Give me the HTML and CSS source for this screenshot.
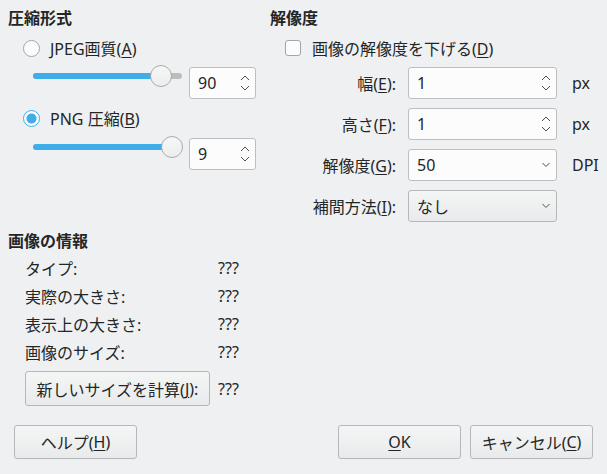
FILE: index.html
```html
<!doctype html>
<html lang="ja">
<head>
  <meta charset="UTF-8">
  <title>画像のエクスポート</title>
  <link rel="stylesheet" href="styles.css">
</head>
<body>
  <div class="dialog">
    <div class="top">
      <div class="col-left">
        <div class="title">圧縮形式</div>
        <div class="option">
          <span class="radio"></span>
          <span>JPEG画質(<u>A</u>)</span>
        </div>
        <div class="slider-row">
          <div class="slider">
            <div class="track"><div class="fill" style="width: 88%"></div></div>
            <div class="knob" style="left: 117px"></div>
          </div>
          <div class="spin small">
            <span class="value">90</span>
            <svg class="arrows" width="10" height="16" viewBox="0 0 10 16">
              <polyline points="1,5 5,1 9,5" />
              <polyline points="1,11 5,15 9,11" />
            </svg>
          </div>
        </div>
        <div class="option">
          <span class="radio checked"></span>
          <span>PNG 圧縮(<u>B</u>)</span>
        </div>
        <div class="slider-row second">
          <div class="slider">
            <div class="track"><div class="fill" style="width: 100%"></div></div>
            <div class="knob" style="left: 128px"></div>
          </div>
          <div class="spin small">
            <span class="value">9</span>
            <svg class="arrows" width="10" height="16" viewBox="0 0 10 16">
              <polyline points="1,5 5,1 9,5" />
              <polyline points="1,11 5,15 9,11" />
            </svg>
          </div>
        </div>
      </div>

      <div class="col-right">
        <div class="title">解像度</div>
        <div class="option check-row">
          <span class="checkbox"></span>
          <span>画像の解像度を下げる(<u>D</u>)</span>
        </div>
        <div class="form">
          <div class="form-row">
            <span class="label">幅(<u>E</u>):</span>
            <div class="spin wide">
              <span class="value">1</span>
              <svg class="arrows" width="10" height="16" viewBox="0 0 10 16">
                <polyline points="1,5 5,1 9,5" />
                <polyline points="1,11 5,15 9,11" />
              </svg>
            </div>
            <span class="unit">px</span>
          </div>
          <div class="form-row">
            <span class="label">高さ(<u>F</u>):</span>
            <div class="spin wide">
              <span class="value">1</span>
              <svg class="arrows" width="10" height="16" viewBox="0 0 10 16">
                <polyline points="1,5 5,1 9,5" />
                <polyline points="1,11 5,15 9,11" />
              </svg>
            </div>
            <span class="unit">px</span>
          </div>
          <div class="form-row">
            <span class="label">解像度(<u>G</u>):</span>
            <div class="spin wide">
              <span class="value">50</span>
              <svg class="arrows" width="10" height="8" viewBox="0 0 10 8">
                <polyline points="1.5,2 5,5.5 8.5,2" />
              </svg>
            </div>
            <span class="unit">DPI</span>
          </div>
          <div class="form-row">
            <span class="label">補間方法(<u>I</u>):</span>
            <div class="spin wide combo">
              <span class="value">なし</span>
              <svg class="arrows" width="10" height="8" viewBox="0 0 10 8">
                <polyline points="1.5,2 5,5.5 8.5,2" />
              </svg>
            </div>
          </div>
        </div>
      </div>
    </div>

    <div class="info">
      <div class="title">画像の情報</div>
      <div class="info-row"><span class="info-label">タイプ:</span><span>???</span></div>
      <div class="info-row"><span class="info-label">実際の大きさ:</span><span>???</span></div>
      <div class="info-row"><span class="info-label">表示上の大きさ:</span><span>???</span></div>
      <div class="info-row"><span class="info-label">画像のサイズ:</span><span>???</span></div>
      <div class="info-row calc">
        <span class="info-label"><span class="btn calc-btn">新しいサイズを計算(<u>J</u>):</span></span>
        <span>???</span>
      </div>
    </div>

    <div class="buttons">
      <span class="btn">ヘルプ(<u>H</u>)</span>
      <span class="spacer"></span>
      <span class="btn"><u>O</u>K</span>
      <span class="btn">キャンセル(<u>C</u>)</span>
    </div>
  </div>
</body>
</html>
```

FILE: styles.css
```css
html, body {
    margin: 0;
    padding: 0;
}

body {
    width: 607px;
    height: 474px;
    background: #eff0f1;
    color: #232627;
    font-family: "Noto Sans", "Noto Sans CJK JP", sans-serif;
    font-size: 16px;
    overflow: hidden;
}

u {
    text-decoration: underline;
    text-underline-offset: 2px;
    text-decoration-thickness: 1px;
}

.dialog {
    padding: 7px 0 0 8px;
}

.top {
    display: flex;
    height: 215px;
}

.col-left {
    width: 262px;
}

.col-right {
    flex: 1;
}

.title {
    font-weight: bold;
    height: 22px;
    line-height: 22px;
}

.option {
    display: flex;
    align-items: center;
    height: 28px;
    margin-top: 5px;
    padding-left: 15px;
}

.radio {
    width: 15px;
    height: 15px;
    border: 1px solid #a2a4a6;
    border-radius: 50%;
    background: #fcfcfc;
    margin-right: 10px;
}

.radio.checked {
    border-color: #3daee9;
    background: radial-gradient(circle, #3daee9 0 4.5px, #fcfcfc 5.5px);
}

.slider-row {
    display: flex;
    height: 32px;
    margin-top: 5px;
}

.slider-row.second {
    margin-top: 6px;
}

.slider {
    position: relative;
    width: 149px;
    height: 20px;
    margin: -1px 7px 0 25px;
}

.track {
    margin-top: 7px;
    height: 6px;
    border-radius: 3px;
    background: #bcbdbe;
    overflow: hidden;
}

.fill {
    height: 100%;
    background: #3daee9;
}

.knob {
    position: absolute;
    top: -1px;
    width: 20px;
    height: 20px;
    border: 1px solid #a9abad;
    border-radius: 50%;
    background: linear-gradient(#f6f7f7, #eceded);
}

.spin {
    position: relative;
    display: flex;
    align-items: center;
    box-sizing: border-box;
    height: 32px;
    border: 1px solid #bcbebf;
    border-radius: 3px;
    background: #fcfcfc;
    padding-left: 8px;
}

.spin.small {
    width: 67px;
}

.spin.wide {
    width: 149px;
}

.spin.combo {
    background: linear-gradient(#f4f5f5, #e9eaeb);
    border-color: #b5b7b8;
}

.value {
    flex: 1;
}

.arrows {
    margin-right: 5px;
    fill: none;
    stroke: #4d5052;
    stroke-width: 1;
}

.check-row {
    padding-left: 15px;
}

.checkbox {
    width: 14px;
    height: 14px;
    border: 1px solid #a2a4a6;
    border-radius: 3px;
    background: #fcfcfc;
    margin-right: 11px;
}

.form {
    margin-top: 5px;
    display: flex;
    flex-direction: column;
    gap: 9px;
}

.form-row {
    display: flex;
    align-items: center;
    height: 32px;
}

.label {
    width: 126px;
    text-align: right;
    margin-right: 12px;
}

.unit {
    margin-left: 15px;
}

.info {
    margin-top: 8px;
}

.info-row {
    display: flex;
    align-items: center;
    height: 28px;
    padding-left: 17px;
}

.info-row:nth-child(2) {
    margin-top: 2px;
}

.info-label {
    width: 193px;
}

.info-row.calc {
    height: 35px;
    margin-top: 5px;
}

.btn {
    display: flex;
    align-items: center;
    justify-content: center;
    box-sizing: border-box;
    width: 123px;
    height: 34px;
    border: 1px solid #b5b7b8;
    border-radius: 3px;
    background: linear-gradient(#f4f5f5, #e9eaeb);
}

.calc-btn {
    width: 185px;
    height: 35px;
}

.buttons {
    display: flex;
    gap: 9px;
    margin-top: 19px;
    padding: 0 14px 0 6px;
}

.spacer {
    flex: 1;
}
```
